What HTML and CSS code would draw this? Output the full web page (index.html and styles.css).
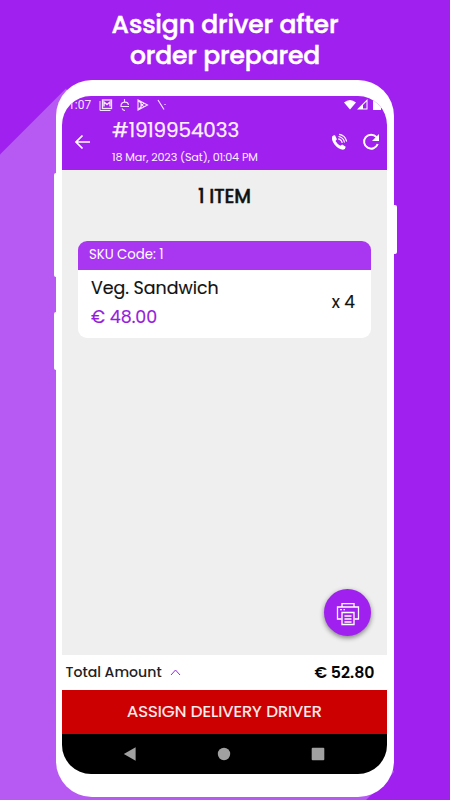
FILE: index.html
```html
<!DOCTYPE html>
<html lang="en">
<head>
<meta charset="utf-8">
<title>Assign driver after order prepared</title>
<link rel="stylesheet" href="styles.css">
</head>
<body>
<main class="poster">
  <svg class="shade" viewBox="0 0 450 800" aria-hidden="true"><path d="M0 154.500L66 88.500L394 772L366 800H0Z"/></svg>
  <h1 class="headline"><span>Assign driver after</span><span>order prepared</span></h1>
  <section class="phone">
    <i class="key key-volume"></i><i class="key key-mute"></i><i class="key key-power"></i>
    <div class="screen">
      <div class="status">
        <span class="clock">1:07</span>
        <svg class="notes" viewBox="0 0 68 14" fill="none" stroke="currentColor">
          <path d="M1 3V12.500H11.500" stroke-width="1"/><rect x="3.500" y="2" width="9" height="8.500" stroke-width="1.300"/><path d="M5 8.500V4L8 6.500L11 4V8.500" stroke-width="1.400"/>
          <path d="M25.500 1V3.500M22 8C22 3 29 3 29.500 7M21.500 8.500H30M23 10.500Q24 12.500 26 12.500" stroke-width="1.100"/>
          <path d="M39 2V12L48.500 7ZM39 2L45 9M39 12L45 5M42 4V10" stroke-width="1.100"/>
          <path d="M59 2L65 11.500M66 6V7" stroke-width="1.200"/>
        </svg>
        <svg class="signals" viewBox="0 0 40 14" fill="currentColor">
          <path d="M0 4.500Q6 -0.500 12 4.500L6 11.500Z"/><path d="M13 11.500L23.500 1V11.500Z"/><path d="M19 7L22.500 3.500V10.500H19Z" fill="#a020f0"/><path d="M29 2H31.500V1H34.500V2H37V12H29Z"/>
        </svg>
      </div>
      <header class="bar">
        <svg class="back" viewBox="0 0 18 16"><path d="M16 8H2M8.500 1.500L2 8L8.500 14.500"/></svg>
        <div class="order"><div class="number">#1919954033</div><div class="date">18 Mar, 2023 (Sat), 01:04 PM</div></div>
        <svg class="call" viewBox="0 0 18 18"><path d="M2.300 3.300Q3.500 2 5 2.300L6.900 6.200L5.500 8Q7.200 11 10.300 12.700L12.200 11.500L15.700 13.700Q15.500 16.500 13 16.700Q8.500 16.500 4.500 11.500Q1 7 2.300 3.300Z" fill="currentColor"/><path d="M8.200 5.800Q11.700 6.500 12.200 10M8.500 3.500Q13.700 4.500 14.500 9.500M9 1.300Q15.300 2.200 16.700 8.500" fill="none" stroke="currentColor" stroke-width="1.200"/></svg>
        <svg class="reload" viewBox="0 0 18 18"><path d="M14.500 4.200A7 7 0 1 0 15.700 11" fill="none" stroke="currentColor" stroke-width="2"/><path d="M17 1V8H10Z" fill="currentColor"/></svg>
      </header>
      <div class="content">
        <h2 class="count">1 ITEM</h2>
        <article class="card">
          <div class="sku">SKU Code: 1</div>
          <div class="item">
            <div><div class="name">Veg. Sandwich</div><div class="price">€ 48.00</div></div>
            <div class="quantity">x 4</div>
          </div>
        </article>
        <div class="print">
          <svg viewBox="0 0 24 24" fill="none" stroke="currentColor" stroke-width="1.300"><path d="M6 5V1.700H18V5M5.500 17H1.500V5H22.500V17H18.500"/><path d="M6 10.500H18V22.500H6ZM8.500 14H15.500M8.500 17H15.500M8.500 20H15.500M4 7.700H6M7.500 7.700H9"/></svg>
        </div>
      </div>
      <div class="total"><span class="label">Total Amount</span><svg class="chevron" viewBox="0 0 11 7"><path d="M1 6L5.500 1L10 6"/></svg><span class="sum">€ 52.80</span></div>
      <div class="assign">ASSIGN DELIVERY DRIVER</div>
      <nav class="system">
        <svg viewBox="0 0 14 14"><path d="M.8 7L12.600 .2V13.800Z"/></svg><svg viewBox="0 0 14 14"><circle cx="7" cy="7" r="6.200"/></svg><svg viewBox="0 0 14 14"><rect x=".7" y=".7" width="12.600" height="12.600" rx="1"/></svg>
      </nav>
    </div>
  </section>
</main>
</body>
</html>
```
FILE: styles.css
```css
* { box-sizing: border-box; }
body { margin: 0; font-family: Poppins, Inter, "Open Sans", sans-serif; }
svg { display: block; flex: none; }
.poster { position: relative; width: 450px; height: 800px; overflow: hidden; background: #a020f0; color: #fff; }
.shade { position: absolute; inset: 0; width: 450px; height: 800px; fill: #b75af4; }
.headline { position: relative; height: 79.500px; margin: 0; padding-top: 9px; font-size: 25px; line-height: 31px; font-weight: 500; letter-spacing: -.12px; -webkit-text-stroke: .5px; text-align: center; white-space: nowrap; }
.headline span { display: block; height: 31px; }
.phone { position: relative; width: 338px; height: 717px; margin-left: 56px; padding: 16px 7px 23px 6px; border-radius: 36px; background: #fff; }
.key { position: absolute; width: 5px; background: #fff; border-radius: 2px; }
.key-volume { left: -2px; top: 93px; height: 104px; }
.key-mute { left: -2px; top: 232px; height: 58px; }
.key-power { right: -2.500px; top: 125px; height: 49px; }
.screen { display: flex; flex-direction: column; height: 678px; overflow: hidden; border-radius: 29px; background: #efefef; white-space: nowrap; }
.status { display: flex; height: 18px; align-items: center; padding: 1px 3px 0 6px; background: #a020f0; color: #f6e4ff; }
.clock { width: 31px; font: 12px Roboto, sans-serif; }
.notes { width: 68px; height: 14px; }
.signals { width: 40px; height: 14px; margin-left: auto; color: #fff; }
.bar { display: flex; height: 56px; align-items: center; padding: 0 7px 0 12px; background: #a020f0; }
.back { width: 18px; height: 16px; margin-right: 20px; fill: none; stroke: #fff; stroke-width: 1.700; }
.order { align-self: flex-start; flex: 1; color: #fbf0ff; }
.number { height: 32px; line-height: 33px; font-size: 20px; letter-spacing: -.15px; -webkit-text-stroke: .25px; }
.date { height: 22px; line-height: 23px; font-size: 11.200px; letter-spacing: -.13px; }
.call { width: 18px; height: 18px; margin-right: 14px; }
.reload { width: 18px; height: 18px; }
.content { display: flex; flex: 1; flex-direction: column; padding: 0 16px 19px; }
.count { height: 71px; margin: 0; line-height: 54px; font-size: 19px; font-weight: 500; letter-spacing: -.2px; -webkit-text-stroke: .4px; color: #111; text-align: center; }
.card { height: 97px; overflow: hidden; border-radius: 9px; background: #fff; }
.sku { height: 29px; padding-left: 11px; line-height: 28px; background: #a937f1; font-size: 13.300px; letter-spacing: -.05px; }
.item { display: flex; height: 68px; align-items: center; justify-content: space-between; padding: 0 16px 2px 13px; color: #111; font-size: 17.400px; }
.name, .price { line-height: 29px; -webkit-text-stroke: .15px; }
.price { color: #961bdc; }
.quantity { padding-bottom: 1px; font-size: 17px; -webkit-text-stroke: .15px; }
.print { display: grid; width: 47px; height: 47px; margin-top: auto; margin-left: auto; place-items: center; border-radius: 50%; background: #a020f0; box-shadow: 0 2px 5px #0007; }
.print svg { width: 24px; height: 24px; margin-top: 4px; }
.total { display: flex; height: 35px; align-items: center; padding: 0 12.500px 0 3.500px; background: #fff; color: #222; }
.label { font-size: 14.100px; font-weight: 500; }
.chevron { width: 11px; height: 7px; margin-left: 8px; fill: none; stroke: #a020f0; stroke-width: 1; }
.sum { margin-left: auto; padding-top: 1px; color: #050505; font-size: 15.800px; font-weight: 600; }
.assign { height: 44px; line-height: 43px; background: #c00; color: #fff1f1; font-size: 16.600px; -webkit-text-stroke: .2px; text-align: center; }
.system { display: flex; height: 40px; align-items: center; justify-content: space-between; padding: 0 62px 0 61px; background: #000; fill: #a0a0a0; }
.system svg { width: 14px; height: 14px; }
```
